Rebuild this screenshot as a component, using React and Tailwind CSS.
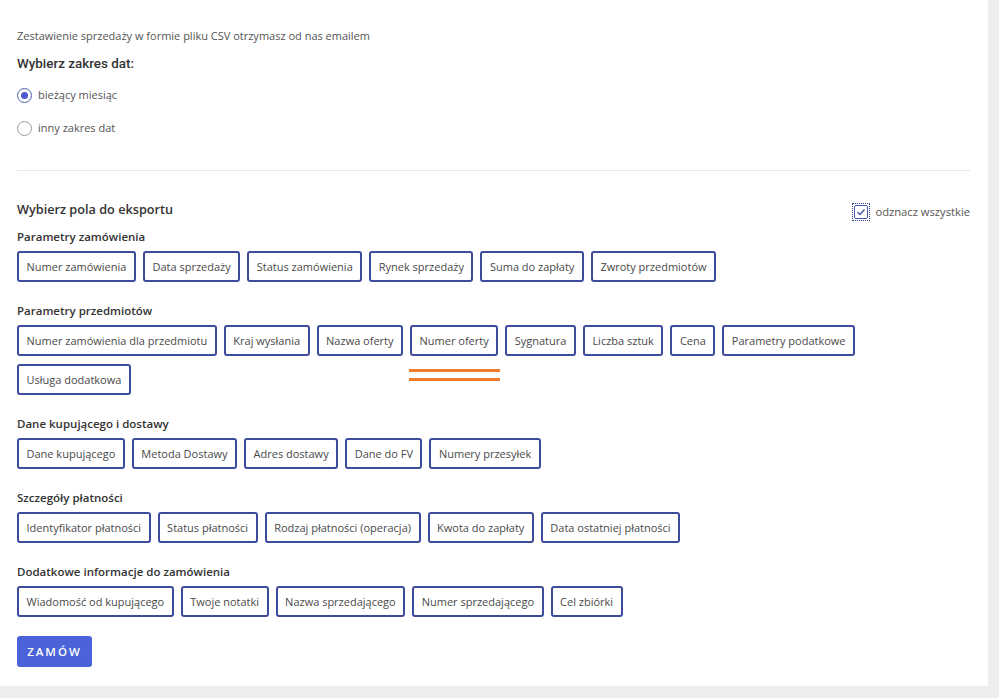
const sections = [
  {
    title: 'Parametry zamówienia',
    fields: ['Numer zamówienia', 'Data sprzedaży', 'Status zamówienia', 'Rynek sprzedaży', 'Suma do zapłaty', 'Zwroty przedmiotów'],
  },
  {
    title: 'Parametry przedmiotów',
    fields: ['Numer zamówienia dla przedmiotu', 'Kraj wysłania', 'Nazwa oferty', 'Numer oferty', 'Sygnatura', 'Liczba sztuk', 'Cena', 'Parametry podatkowe', 'Usługa dodatkowa'],
    marked: true,
  },
  {
    title: 'Dane kupującego i dostawy',
    fields: ['Dane kupującego', 'Metoda Dostawy', 'Adres dostawy', 'Dane do FV', 'Numery przesyłek'],
  },
  {
    title: 'Szczegóły płatności',
    fields: ['Identyfikator płatności', 'Status płatności', 'Rodzaj płatności (operacja)', 'Kwota do zapłaty', 'Data ostatniej płatności'],
  },
  {
    title: 'Dodatkowe informacje do zamówienia',
    fields: ['Wiadomość od kupującego', 'Twoje notatki', 'Nazwa sprzedającego', 'Numer sprzedającego', 'Cel zbiórki'],
  },
]

function FieldButton({ label }) {
  return (
    <button
      type="button"
      className="h-[31px] px-[7.5px] border-2 border-[#3d4b9c] rounded-[3px] bg-white text-[11px] text-[#4a4a4a] leading-none whitespace-nowrap"
    >
      {label}
    </button>
  )
}

function Radio({ checked, label }) {
  return (
    <label className="flex items-center h-[20px] gap-[6px] text-[11px] text-[#555]">
      <span
        className={
          'w-[15px] h-[15px] rounded-full flex items-center justify-center ' +
          (checked ? 'border-[1.5px] border-[#4a5bb0]' : 'border border-[#9a9a9a]')
        }
      >
        {checked && <span className="w-[7px] h-[7px] rounded-full bg-[#4a5bd0]" />}
      </span>
      {label}
    </label>
  )
}

export default function App() {
  return (
    <div className="w-[999px] h-[698px] bg-[#eeeeee] font-['Open_Sans',sans-serif] overflow-hidden">
      <div className="w-[988px] h-[686px] bg-white pt-[28px] pl-[17px] pr-[18px]">
        {/* Date range */}
        <p className="text-[11px] leading-[16px] text-[#555]">
          Zestawienie sprzedaży w formie pliku CSV otrzymasz od nas emailem
        </p>
        <h2 className="mt-[10px] text-[13.4px] leading-[20px] font-medium text-[#333] font-['Roboto',sans-serif]">
          Wybierz zakres dat:
        </h2>
        <div className="mt-[11px]">
          <Radio checked label="bieżący miesiąc" />
        </div>
        <div className="mt-[13px]">
          <Radio label="inny zakres dat" />
        </div>

        <div className="mt-[32px] border-t border-[#e6e6e6]" />

        {/* Export fields */}
        <div className="mt-[29px] flex items-center justify-between h-[20px]">
          <h3 className="text-[12.7px] font-semibold text-[#333]">Wybierz pola do eksportu</h3>
          <label className="flex items-center gap-[5px] text-[11.2px] text-[#555] mt-[4px]">
            <span className="p-[1px] border border-dotted border-[#2f3d8c]">
              <span className="w-[14px] h-[14px] border-[1.5px] border-[#4a5ba8] rounded-[2px] flex items-center justify-center">
                <svg width="10" height="10" viewBox="0 0 10 10" fill="none">
                  <path d="M1.5 5.2 L4 7.5 L8.5 2.5" stroke="#4a5ba8" strokeWidth="1.5" />
                </svg>
              </span>
            </span>
            odznacz wszystkie
          </label>
        </div>

        {sections.map((s, i) => (
          <div key={s.title} className={i === 0 ? 'mt-[9px]' : 'mt-[21px]'}>
            <h4 className="text-[11.5px] leading-[16px] font-semibold text-[#333]">{s.title}</h4>
            <div className="relative mt-[6px] flex flex-wrap gap-x-[7px] gap-y-[8px]">
              {s.fields.map((f) => (
                <FieldButton key={f} label={f} />
              ))}
              {s.marked && (
                <div className="absolute left-[392px] top-[44px] w-[91px] flex flex-col gap-[6px]">
                  <div className="h-[3px] bg-[#f07a30]" />
                  <div className="h-[3px] bg-[#f07a30]" />
                </div>
              )}
            </div>
          </div>
        ))}

        <button
          type="button"
          className="mt-[19px] h-[31px] w-[75px] rounded-[3px] bg-[#4a63d8] text-white text-[11.5px] font-semibold tracking-[2px]"
        >
          ZAMÓW
        </button>
      </div>
    </div>
  )
}
